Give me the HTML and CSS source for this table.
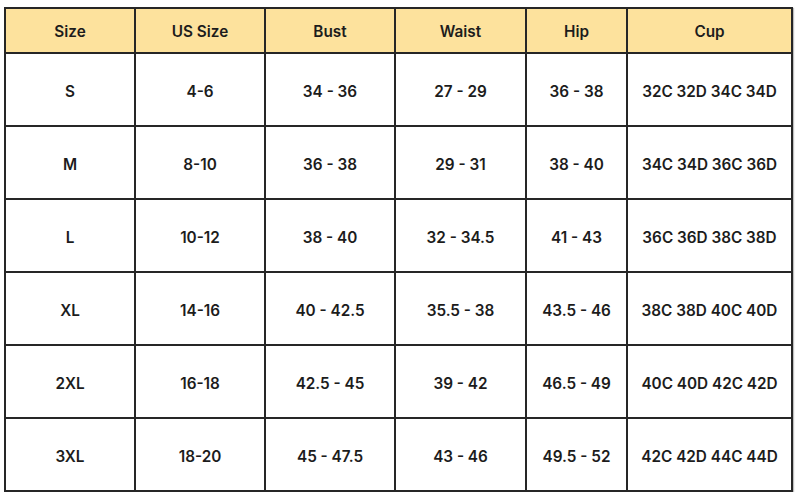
FILE: index.html
```html
<!DOCTYPE html>
<html>
<head>
<meta charset="utf-8">
<link rel="stylesheet" href="styles.css">
</head>
<body>
<div class="chart">
  <div class="cell head">Size</div><div class="cell head">US Size</div><div class="cell head">Bust</div><div class="cell head">Waist</div><div class="cell head">Hip</div><div class="cell head">Cup</div>
  <div class="cell">S</div><div class="cell">4-6</div><div class="cell">34 - 36</div><div class="cell">27 - 29</div><div class="cell">36 - 38</div><div class="cell">32C 32D 34C 34D</div>
  <div class="cell">M</div><div class="cell">8-10</div><div class="cell">36 - 38</div><div class="cell">29 - 31</div><div class="cell">38 - 40</div><div class="cell">34C 34D 36C 36D</div>
  <div class="cell">L</div><div class="cell">10-12</div><div class="cell">38 - 40</div><div class="cell">32 - 34.5</div><div class="cell">41 - 43</div><div class="cell">36C 36D 38C 38D</div>
  <div class="cell">XL</div><div class="cell">14-16</div><div class="cell">40 - 42.5</div><div class="cell">35.5 - 38</div><div class="cell">43.5 - 46</div><div class="cell">38C 38D 40C 40D</div>
  <div class="cell">2XL</div><div class="cell">16-18</div><div class="cell">42.5 - 45</div><div class="cell">39 - 42</div><div class="cell">46.5 - 49</div><div class="cell">40C 40D 42C 42D</div>
  <div class="cell">3XL</div><div class="cell">18-20</div><div class="cell">45 - 47.5</div><div class="cell">43 - 46</div><div class="cell">49.5 - 52</div><div class="cell">42C 42D 44C 44D</div>
</div>
</body>
</html>
```
FILE: styles.css
```css
html, body {
  margin: 0;
  padding: 0;
  background: #ffffff;
}
body {
  padding: 7px 0 0 4px;
  font-family: "Inter", "Open Sans", sans-serif;
}
.chart {
  display: grid;
  grid-template-columns: 128px 128px 128px 129px 99px 163px;
  grid-template-rows: 43px repeat(6, 71px);
  gap: 2px;
  padding: 2px;
  width: max-content;
  background: #262626;
  box-shadow: 1px 1px 1px rgba(0,0,0,0.25);
}
.cell {
  background: #ffffff;
  display: flex;
  align-items: center;
  justify-content: center;
  padding-top: 4px;
  box-sizing: border-box;
  font-size: 15.3px;
  font-weight: 600;
  color: #1c1c1c;
}
.cell.head {
  background: #fde29d;
  padding-top: 2px;
}
```
